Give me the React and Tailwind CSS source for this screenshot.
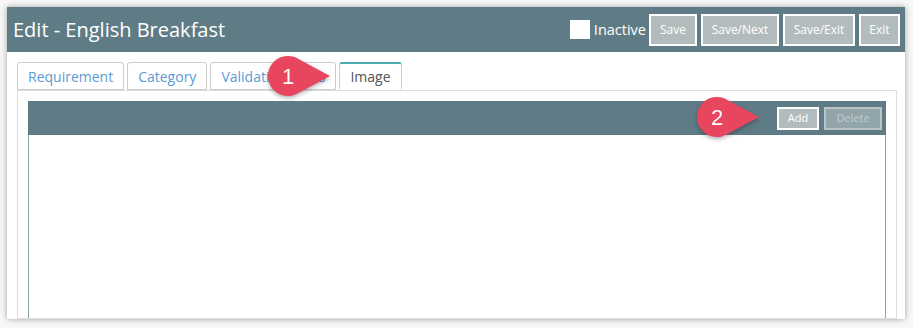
import React from 'react';

const Callout = ({ label, className }) => (
  <div className={`absolute ${className}`}>
    <svg width="70" height="52" viewBox="0 0 70 52" style={{ filter: 'drop-shadow(0 2px 2px rgba(0,0,0,0.3))' }}>
      <path d="M63 25 L30.5 7.4 A20 20 0 1 0 30.5 42.6 Z" fill="#e8455f" strokeLinejoin="round" />
      <text x="21" y="33" textAnchor="middle" fill="#fff" fontSize="22" fontFamily="Liberation Sans, Arial, sans-serif">
        {label}
      </text>
    </svg>
  </div>
);

const HeaderButton = ({ children, className = '' }) => (
  <button className={`h-8 border-2 border-white bg-[#b3bcbd] text-[12px] text-white ${className}`}>
    {children}
  </button>
);

const tabs = ['Requirement', 'Category', 'Validation Rules', 'Image'];

export default function App() {
  return (
    <div className="relative h-[328px] w-[913px] overflow-hidden bg-[#f7f7f7] p-[7px] pr-2" style={{ fontFamily: '"Open Sans", sans-serif' }}>
      <div className="flex h-[312px] w-[898px] flex-col overflow-hidden bg-white shadow-[0_0_6px_rgba(0,0,0,0.35)]">
        {/* Title bar */}
        <div className="flex h-[45px] shrink-0 items-center bg-[#5f7c86] pl-[6px] pr-[5px]">
          <h1 className="flex-1 text-[20px] leading-none text-white">Edit - English Breakfast</h1>
          <div className="flex items-center">
            <span className="mr-[4px] h-[19px] w-[20px] bg-white" />
            <span className="mr-[3px] text-[14.5px] text-white">Inactive</span>
            <div className="flex gap-[4px]">
              <HeaderButton className="w-[48px]">Save</HeaderButton>
              <HeaderButton className="w-[78px]">Save/Next</HeaderButton>
              <HeaderButton className="w-[72px]">Save/Exit</HeaderButton>
              <HeaderButton className="w-[41px]">Exit</HeaderButton>
            </div>
          </div>
        </div>

        {/* Body */}
        <div className="flex flex-1 flex-col px-[10px] pt-[10px] pr-[8px]">
          <div className="flex gap-[3px]">
            {tabs.map((t) => {
              const active = t === 'Image';
              return (
                <div
                  key={t}
                  className={`relative flex h-[28px] items-center rounded-t-[3px] border px-[10px] text-[14px] ${
                    active
                      ? 'z-10 -mb-px border-[#ccc] border-t-[#4fa9b1] border-t-2 border-b-white bg-white text-[#555]'
                      : 'border-[#ccc] text-[#5b9bd5]'
                  }`}
                >
                  {t}
                </div>
              );
            })}
          </div>
          <div className="flex flex-1 flex-col border border-[#ddd] px-[10px] pt-[10px]">
            <div className="flex flex-1 flex-col">
              <div className="flex h-[34px] items-center justify-end gap-[5px] bg-[#5f7c86] pr-[4px]">
                <button className="h-[23px] w-[42px] border-2 border-white bg-[#b3bcbd] text-[11px] text-white">Add</button>
                <button className="h-[23px] w-[58px] border-2 border-[#b9c4c6] bg-[#91a5aa] text-[11px] text-[#c2cdcf]">Delete</button>
              </div>
              <div className="flex-1 border-x border-[#8ea3a3] bg-white" />
            </div>
          </div>
        </div>
      </div>

      <Callout label="1" className="left-[267px] top-[51px]" />
      <Callout label="2" className="left-[696px] top-[92px]" />
    </div>
  );
}
